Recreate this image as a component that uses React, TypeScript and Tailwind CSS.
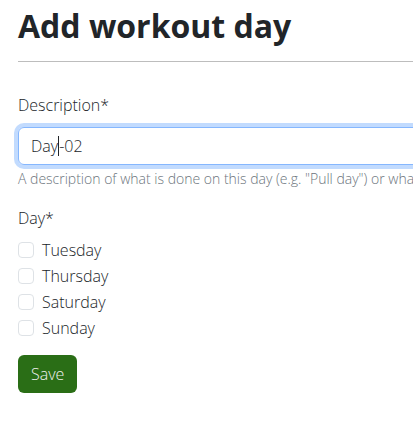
import React from 'react';

const days = ['Tuesday', 'Thursday', 'Saturday', 'Sunday'];

export default function App() {
  return (
    <div className="w-[413px] h-[421px] overflow-hidden bg-white font-['Open_Sans',sans-serif] text-[#212529]">
      <div className="w-[760px] pl-[18px] pt-[7px]">
        <h1 className="text-[32px] font-bold leading-[1.2] m-0">Add workout day</h1>
        <hr className="mt-[16px] border-0 border-t border-[#bdbdbd]" />

        <form className="mt-[31px]">
          <label className="block text-base font-light leading-6">Description*</label>
          <div className="mt-[10px] h-[38px] rounded-[6px] border border-[#86b7fe] shadow-[0_0_0_4px_rgba(13,110,253,0.25)] flex items-center px-3 text-base font-light">
            <span>Day</span>
            <span className="inline-block w-px h-[20px] bg-[#212529]" />
            <span>-02</span>
          </div>
          <p className="mt-[4px] text-sm font-light text-[#6c757d] leading-5">
            A description of what is done on this day (e.g. "Pull day") or what body parts are trained (e.g. "Arms and abs")
          </p>

          <div className="mt-[17px] text-base font-light leading-6">Day*</div>
          <div className="mt-[7px] flex flex-col">
            {days.map((d) => (
              <label key={d} className="flex items-center gap-2 h-[26px] text-base font-light">
                <span className="w-4 h-4 rounded-[4px] border border-[#dee2e6] bg-white" />
                {d}
              </label>
            ))}
          </div>

          <button
            type="button"
            className="mt-[14px] h-[38px] px-[13px] rounded-[6px] bg-[#2a6e16] text-[#f0f0f0] text-base font-light"
          >
            Save
          </button>
        </form>
      </div>
    </div>
  );
}
